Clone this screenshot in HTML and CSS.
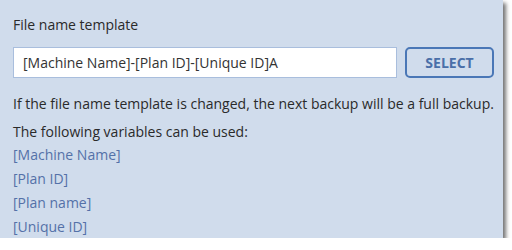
FILE: index.html
```html
<!DOCTYPE html>
<html>
<head>
<meta charset="utf-8">
<link rel="stylesheet" href="styles.css">
</head>
<body>
<div class="panel">
  <div class="title">File name template</div>
  <div class="row">
    <div class="input">[Machine Name]-[Plan ID]-[Unique ID]A</div>
    <button class="select">SELECT</button>
  </div>
  <div class="note">If the file name template is changed, the next backup will be a full backup.</div>
  <div class="vars-title">The following variables can be used:</div>
  <div class="var">[Machine Name]</div>
  <div class="var">[Plan ID]</div>
  <div class="var">[Plan name]</div>
  <div class="var">[Unique ID]</div>
</div>
</body>
</html>
```
FILE: styles.css
```css
html, body {
  margin: 0;
  padding: 0;
  background: #ffffff;
}
body {
  font-family: "Open Sans", "Noto Sans", sans-serif;
  font-size: 14px;
  color: #2a2a2a;
}
.panel {
  width: 503px;
  height: 238px;
  box-sizing: border-box;
  background: #d0dcec;
  box-shadow: 3px 3px 4px rgba(0, 0, 0, 0.55);
  padding: 14px 0 0 13px;
  display: flex;
  flex-direction: column;
}
.title {
  line-height: 22px;
}
.row {
  display: flex;
  gap: 8px;
  margin-top: 11px;
  height: 31px;
}
.input {
  width: 384px;
  box-sizing: border-box;
  background: #ffffff;
  border: 1px solid #a9bedd;
  padding: 0 9px;
  line-height: 29px;
  color: #333;
}
.select {
  width: 89px;
  box-sizing: border-box;
  border: 2px solid #4a77b6;
  border-radius: 5px;
  background: transparent;
  color: #4a6fa8;
  font-family: "Open Sans", "Noto Sans", sans-serif;
  font-weight: 700;
  font-size: 14px;
  padding: 0;
}
.note {
  margin-top: 15px;
  line-height: 22px;
}
.vars-title {
  margin-top: 6px;
  line-height: 22px;
}
.var {
  line-height: 24px;
  color: #5471a8;
}
```
